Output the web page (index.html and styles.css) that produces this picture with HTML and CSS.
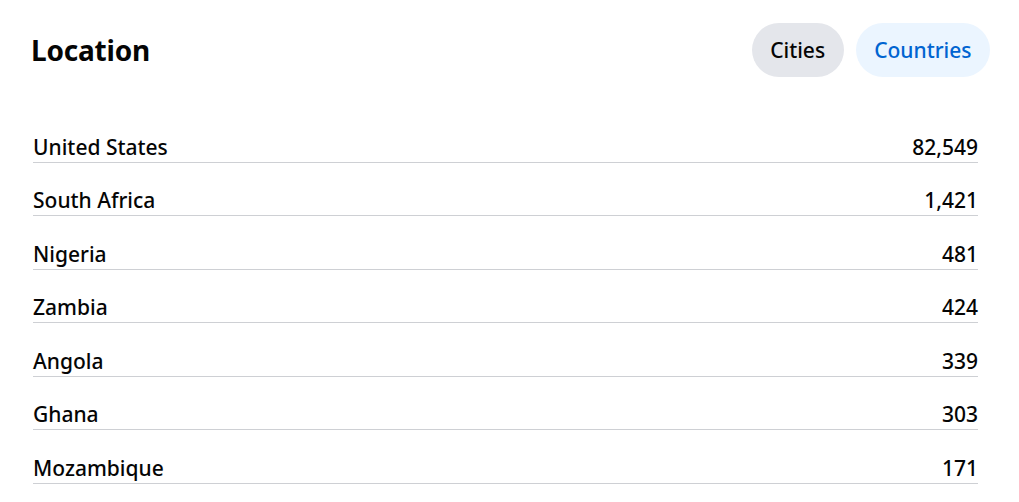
FILE: index.html
```html
<!DOCTYPE html>
<html>
<head>
<meta charset="utf-8">
<link rel="stylesheet" href="styles.css">
</head>
<body>
<div class="card">
  <div class="header">
    <h2 class="title">Location</h2>
    <div class="tabs">
      <button class="tab tab-grey">Cities</button>
      <button class="tab tab-blue">Countries</button>
    </div>
  </div>
  <ul class="list">
    <li class="row"><span>United States</span><span>82,549</span></li>
    <li class="row"><span>South Africa</span><span>1,421</span></li>
    <li class="row"><span>Nigeria</span><span>481</span></li>
    <li class="row"><span>Zambia</span><span>424</span></li>
    <li class="row"><span>Angola</span><span>339</span></li>
    <li class="row"><span>Ghana</span><span>303</span></li>
    <li class="row"><span>Mozambique</span><span>171</span></li>
  </ul>
</div>
</body>
</html>
```
FILE: styles.css
```css
* { box-sizing: border-box; }
body {
  margin: 0;
  background: #fff;
  font-family: "Noto Sans", "Open Sans", sans-serif;
  color: #050505;
}
.card {
  padding: 22px 29px 0 31px;
}
.header {
  display: flex;
  justify-content: space-between;
  align-items: center;
  height: 55px;
}
.title {
  margin: 0;
  font-size: 28px;
  font-weight: 700;
  letter-spacing: -0.2px;
}
.tabs {
  display: flex;
  gap: 12px;
}
.tab {
  border: none;
  font-family: inherit;
  font-size: 21px;
  font-weight: 500;
  height: 54px;
  padding: 0 18.5px;
  border-radius: 27px;
  cursor: pointer;
}
.tab-grey { background: #e4e6eb; color: #050505; }
.tab-blue { background: #ebf5ff; color: #0064d1; }
.list {
  list-style: none;
  margin: 32px 12px 0 2px;
  padding: 0;
}
.row {
  display: flex;
  justify-content: space-between;
  align-items: flex-end;
  height: 53.5px;
  padding-bottom: 1px;
  border-bottom: 1px solid #ced0d4;
  font-size: 21px;
  font-weight: 500;
  line-height: 28px;
}
```
